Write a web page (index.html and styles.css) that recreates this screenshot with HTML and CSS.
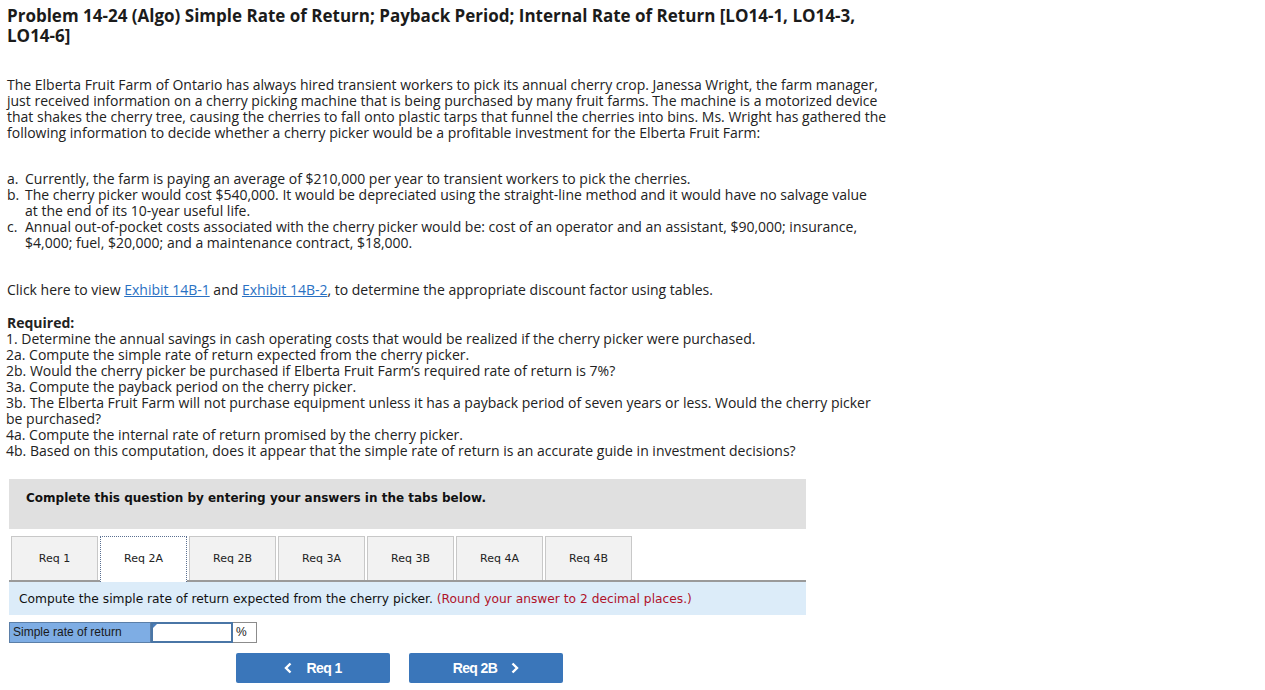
FILE: index.html
```html
<!DOCTYPE html>
<html>
<head>
<meta charset="utf-8">
<link rel="stylesheet" href="styles.css">
</head>
<body>
<div class="page">
  <h1 class="title">Problem 14-24 (Algo) Simple Rate of Return; Payback Period; Internal Rate of Return [<span class="nw">LO14-1,</span> <span class="nw">LO14-3,</span> <span class="nw">LO14-6]</span></h1>
  <p class="intro">The Elberta Fruit Farm of Ontario has always hired transient workers to pick its annual cherry crop. Janessa Wright, the farm manager, just received information on a cherry picking machine that is being purchased by many fruit farms. The machine is a motorized device that shakes the cherry tree, causing the cherries to fall onto plastic tarps that funnel the cherries into bins. Ms. Wright has gathered the following information to decide whether a cherry picker would be a profitable investment for the Elberta Fruit Farm:</p>
  <ol class="facts">
    <li><span class="mk">a.</span><span>Currently, the farm is paying an average of $210,000 per year to transient workers to pick the cherries.</span></li>
    <li><span class="mk">b.</span><span>The cherry picker would cost $540,000. It would be depreciated using the straight-line method and it would have no salvage value at the end of its 10-year useful life.</span></li>
    <li><span class="mk">c.</span><span>Annual out-of-pocket costs associated with the cherry picker would be: cost of an operator and an assistant, $90,000; insurance, $4,000; fuel, $20,000; and a maintenance contract, $18,000.</span></li>
  </ol>
  <p class="click">Click here to view <a href="#">Exhibit 14B-1</a> and <a href="#">Exhibit 14B-2</a>, to determine the appropriate discount factor using tables.</p>
  <div class="required">
    <div class="req-head">Required:</div>
    <div>1. Determine the annual savings in cash operating costs that would be realized if the cherry picker were purchased.</div>
    <div>2a. Compute the simple rate of return expected from the cherry picker.</div>
    <div>2b. Would the cherry picker be purchased if Elberta Fruit Farm’s required rate of return is 7%?</div>
    <div>3a. Compute the payback period on the cherry picker.</div>
    <div>3b. The Elberta Fruit Farm will not purchase equipment unless it has a payback period of seven years or less. Would the cherry picker be purchased?</div>
    <div>4a. Compute the internal rate of return promised by the cherry picker.</div>
    <div>4b. Based on this computation, does it appear that the simple rate of return is an accurate guide in investment decisions?</div>
  </div>

  <div class="widget">
    <div class="banner">Complete this question by entering your answers in the tabs below.</div>
    <div class="tabs">
      <div class="tab">Req 1</div>
      <div class="tab active">Req 2A</div>
      <div class="tab">Req 2B</div>
      <div class="tab">Req 3A</div>
      <div class="tab">Req 3B</div>
      <div class="tab">Req 4A</div>
      <div class="tab">Req 4B</div>
    </div>
    <div class="prompt">Compute the simple rate of return expected from the cherry picker. <span class="hint">(Round your answer to 2 decimal places.)</span></div>
    <div class="answer">
      <div class="label">Simple rate of return</div>
      <div class="field"><span class="flag"></span></div>
      <div class="unit">%</div>
    </div>
    <div class="nav">
      <button class="btn"><svg class="chev" width="8" height="12" viewBox="0 0 8 12"><polyline points="6.5,1.5 2,6 6.5,10.5" fill="none" stroke="#fff" stroke-width="2.4"/></svg>Req 1</button>
      <button class="btn">Req 2B<svg class="chev right" width="8" height="12" viewBox="0 0 8 12"><polyline points="1.5,1.5 6,6 1.5,10.5" fill="none" stroke="#fff" stroke-width="2.4"/></svg></button>
    </div>
  </div>
</div>
</body>
</html>
```

FILE: styles.css
```css
* { box-sizing: border-box; }
body {
  margin: 0;
  background: #fff;
  color: #222;
  font-family: "Open Sans", "Liberation Sans", Arial, sans-serif;
}
.page {
  padding: 6px 0 0 7px;
}
.title {
  font-size: 17px;
  font-weight: 700;
  line-height: 20px;
  margin: 0;
  width: 870px;
  color: #1b1b1b;
}
.nw {
  white-space: nowrap;
}
.intro {
  font-size: 14px;
  line-height: 16px;
  margin: 31px 0 0 0;
  width: 885px;
}
.facts {
  list-style: none;
  margin: 30px 0 0 0;
  padding: 0;
  font-size: 14px;
  line-height: 16px;
  width: 875px;
}
.facts li {
  display: flex;
}
.facts .mk {
  width: 18px;
  flex: none;
}
.click {
  font-size: 14px;
  line-height: 16px;
  margin: 31px 0 0 0;
}
.click a {
  color: #2a71c3;
  text-decoration: underline;
}
.required {
  font-size: 14px;
  line-height: 16px;
  margin-top: 17px;
  width: 878px;
  margin-left: -1px;
}
.req-head {
  font-weight: 700;
  margin-left: 1px;
}
.widget {
  margin: 20px 0 0 2px;
  width: 797px;
  font-family: "DejaVu Sans", Verdana, sans-serif;
}
.banner {
  background: #e0e0e0;
  height: 50px;
  padding: 12px 0 0 17px;
  font-size: 12px;
  font-weight: bold;
  color: #111;
}
.tabs {
  display: flex;
  gap: 2px;
  margin-top: 7px;
  padding-left: 2px;
  border-bottom: 2px solid #9a9a9a;
}
.tab {
  width: 87px;
  height: 44px;
  background: #f2f2f2;
  border: 1px solid #c8c8c8;
  border-bottom: none;
  display: flex;
  align-items: center;
  justify-content: center;
  font-size: 11px;
  color: #222;
}
.tab.active {
  background: #fff;
  border: 1px dotted #5a6f90;
  border-bottom: none;
  margin-bottom: -2px;
  height: 46px;
  padding-bottom: 2px;
}
.prompt {
  background: #dcecf9;
  height: 33px;
  padding: 10px 0 0 10px;
  font-size: 12.25px;
  color: #111;
}
.hint {
  color: #b0132b;
}
.answer {
  display: flex;
  margin-top: 7px;
  height: 21px;
  font-family: "Liberation Sans", Arial, sans-serif;
  font-size: 12px;
}
.label {
  width: 142px;
  background: #7eade4;
  border: 1px solid #5b7fa8;
  padding: 2px 0 0 3px;
  color: #1a1a1a;
}
.field {
  position: relative;
  width: 82px;
  border: 2px solid #4a76a6;
  background: #fff;
}
.flag {
  position: absolute;
  left: 0;
  top: 0;
  width: 0;
  height: 0;
  border-top: 4px solid #4a7fbd;
  border-right: 4px solid transparent;
}
.unit {
  width: 24px;
  border: 1px solid #8c8c8c;
  border-left: none;
  padding: 2px 0 0 3px;
  color: #222;
}
.nav {
  display: flex;
  gap: 19px;
  margin-top: 10px;
  padding-left: 227px;
}
.btn {
  width: 154px;
  height: 30px;
  background: #3a76ba;
  border: none;
  border-radius: 2px;
  color: #fff;
  font-family: "Liberation Sans", Arial, sans-serif;
  font-weight: bold;
  font-size: 14px;
  letter-spacing: -0.6px;
  display: flex;
  align-items: center;
  justify-content: center;
  padding: 0;
}
.chev {
  margin-right: 14px;
}
.chev.right {
  margin-right: 0;
  margin-left: 14px;
}
```
